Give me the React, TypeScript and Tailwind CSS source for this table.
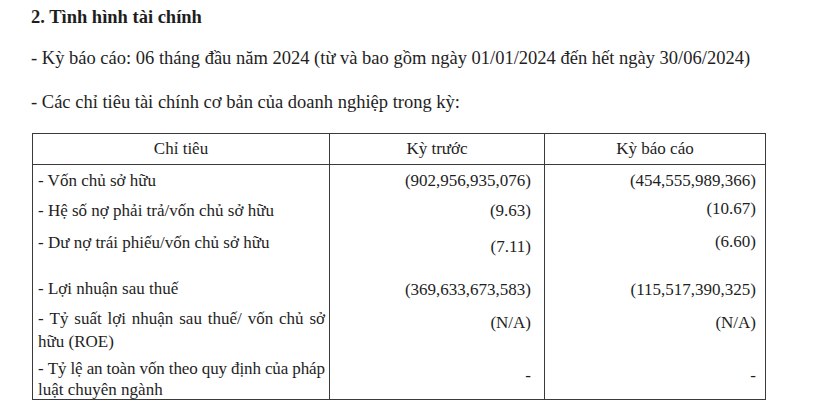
const rows = [
  { label: ["- Vốn chủ sở hữu"], prev: "(902,956,935,076)", cur: "(454,555,989,366)", h: "h-[30px]", lp: "pt-[4px]", pp: "pt-[4px]", cp: "pt-[4px]" },
  { label: ["- Hệ số nợ phải trả/vốn chủ sở hữu"], prev: "(9.63)", cur: "(10.67)", h: "h-[30px]", lp: "pt-[4px]", pp: "pt-[4px]", cp: "pt-[2px]" },
  { label: ["- Dư nợ trái phiếu/vốn chủ sở hữu"], prev: "(7.11)", cur: "(6.60)", h: "h-[40px]", lp: "pt-[6px]", pp: "pt-[10px]", cp: "pt-[5px]" },
  { label: ["- Lợi nhuận sau thuế"], prev: "(369,633,673,583)", cur: "(115,517,390,325)", h: "h-[40px]", lp: "pt-[12px]", pp: "pt-[13px]", cp: "pt-[13px]" },
  { label: ["- Tỷ suất lợi nhuận sau thuế/ vốn chủ sở", "hữu (ROE)"], prev: "(N/A)", cur: "(N/A)", h: "h-[52px]", lp: "pt-[2px]", pp: "pt-[6px]", cp: "pt-[6px]" },
  { label: ["- Tỷ lệ an toàn vốn theo quy định của pháp", "luật chuyên ngành"], prev: "-", cur: "-", h: "h-[42px]", lp: "pt-[1px]", pp: "pt-[7px]", cp: "pt-[7px]" },
];

export default function App() {
  return (
    <div className="w-[820px] h-[407px] overflow-hidden bg-white text-[#1e1e1e] font-['Liberation_Serif','Times_New_Roman',serif] text-[17px]">
      <div className="pl-[31px] pt-[4px] text-[18.5px]">
        <h2 className="font-bold leading-[26px]">2. Tình hình tài chính</h2>
        <p className="mt-[15px] leading-[26px]">
          - Kỳ báo cáo: 06 tháng đầu năm 2024 (từ và bao gồm ngày 01/01/2024 đến hết ngày 30/06/2024)
        </p>
        <p className="mt-[18px] leading-[26px]">- Các chỉ tiêu tài chính cơ bản của doanh nghiệp trong kỳ:</p>
      </div>

      <div className="ml-[32px] mt-[18px] w-[734px] border-[1.5px] border-[#3a3a3a]">
        <div className="grid grid-cols-[297px_215px_1fr] h-[31px] border-b-[1.5px] border-[#3a3a3a]">
          <div className="flex items-center justify-center border-r-[1.5px] border-[#3a3a3a]">Chỉ tiêu</div>
          <div className="flex items-center justify-center border-r-[1.5px] border-[#3a3a3a]">Kỳ trước</div>
          <div className="flex items-center justify-center">Kỳ báo cáo</div>
        </div>
        {rows.map((r, i) => (
          <div key={r.label[0]} className={`grid grid-cols-[297px_215px_1fr] ${r.h}`}>
            <div className={`border-r-[1.5px] border-[#3a3a3a] pl-[5px] pr-[4px] ${i === 5 ? "leading-[21px]" : "leading-[23px]"} ${r.lp}`}>
              {r.label.length > 1 ? (
                <>
                  <div className={`flex justify-between whitespace-nowrap ${i === 5 ? "tracking-[-0.12px]" : ""}`}>
                    {r.label[0].split(" ").map((w, k) => (
                      <span key={k}>{w}</span>
                    ))}
                  </div>
                  <div>{r.label[1]}</div>
                </>
              ) : (
                <div>{r.label[0]}</div>
              )}
            </div>
            <div className={`border-r-[1.5px] border-[#3a3a3a] text-right pr-[13px] leading-[23px] ${r.pp}`}>{r.prev}</div>
            <div className={`text-right pr-[9px] leading-[23px] ${r.cp}`}>{r.cur}</div>
          </div>
        ))}
      </div>
    </div>
  );
}
